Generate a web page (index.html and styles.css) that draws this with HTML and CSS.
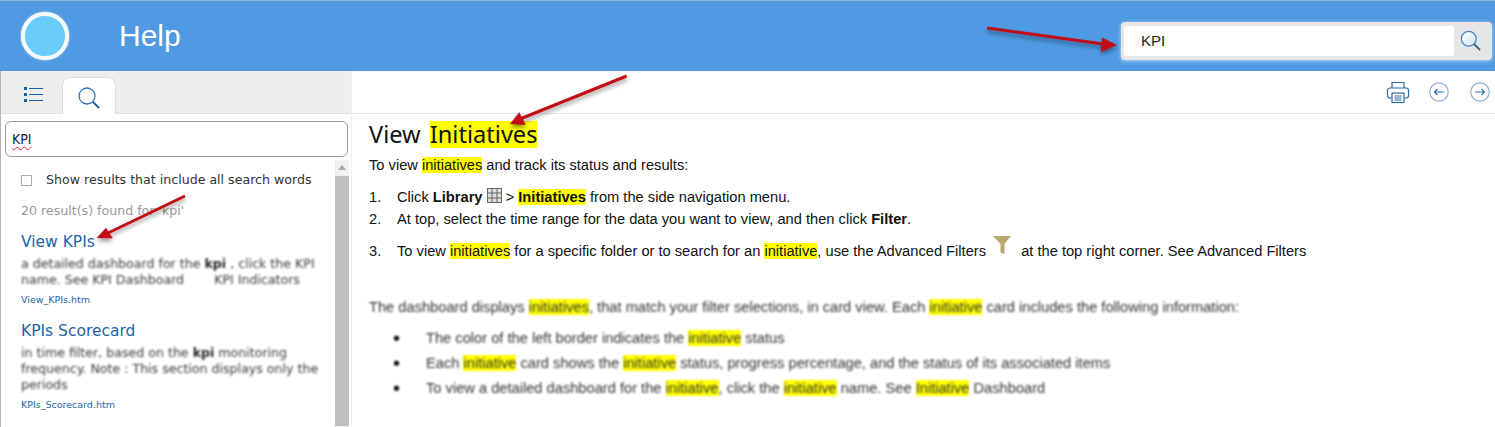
FILE: index.html
```html
<!DOCTYPE html>
<html lang="en">
<head>
<meta charset="utf-8">
<title>Help</title>
<link rel="stylesheet" href="styles.css">
</head>
<body>
<header class="topbar">
  <div class="logo"></div>
  <div class="title">Help</div>
  <div class="top-search">
    <div class="top-input">KPI</div>
    <svg class="top-glass" width="21" height="21" viewBox="0 0 24 24"><defs><linearGradient id="g" x1="0" y1="0" x2="1" y2="1"><stop offset="0" stop-color="#fff"/><stop offset="1" stop-color="#cfe3f5"/></linearGradient></defs><circle cx="10" cy="10" r="8.500" fill="url(#g)" stroke="#4a86bd" stroke-width="1.4"/><path d="M16 16 23 23" stroke="#2b679f" stroke-width="2.200"/></svg>
  </div>
</header>
<div class="main">
  <aside class="side">
    <div class="tabs">
      <div class="tab-list">
        <svg width="19" height="15" viewBox="0 0 19 15"><g fill="#1d5fa0"><rect x="0" y="0" width="3" height="3"/><rect x="0" y="6" width="3" height="3"/><rect x="0" y="12" width="3" height="3"/><rect x="5" y="1" width="14" height="1"/><rect x="5" y="7" width="14" height="1"/><rect x="5" y="13" width="14" height="1"/></g></svg>
      </div>
      <div class="tab-search">
        <svg width="22" height="22" viewBox="0 0 22 22" fill="none"><circle cx="9" cy="9" r="8" stroke="#2a73b8" stroke-width="1.300"/><path d="M15 15 21 21" stroke="#1d5fa0" stroke-width="2"/></svg>
      </div>
    </div>
    <div class="side-input"><span class="squiggle">KPI</span></div>
    <div class="results">
      <div class="results-body">
        <label class="check"><span class="box"></span>Show results that include all search words</label>
        <p class="count">20 result(s) found for 'kpi'</p>
        <div class="result">
          <a class="r-title">View KPIs</a>
          <p class="r-text">a detailed dashboard for the <b>kpi</b> , click the KPI name. See KPI Dashboard <span class="wide">KPI Indicators</span></p>
          <a class="r-file">View_KPIs.htm</a>
        </div>
        <div class="result">
          <a class="r-title">KPIs Scorecard</a>
          <p class="r-text">in time filter, based on the <b>kpi</b> monitoring frequency. Note : This section displays only the periods</p>
          <a class="r-file">KPIs_Scorecard.htm</a>
        </div>
        <div class="result">
          <a class="r-title">KPI Dashboard</a>
        </div>
      </div>
      <div class="scroll"><div class="scroll-up"></div><div class="scroll-thumb"></div></div>
    </div>
  </aside>
  <main class="content">
    <div class="toolbar">
      <svg class="print" width="24" height="24" viewBox="0 0 24 24" fill="none" stroke="#2c6ca6" stroke-width="1.200"><path d="M6 8V2.500h12V8"/><rect x="1.500" y="8" width="21" height="10" rx="2.500"/><rect x="6" y="13" width="12" height="9.500" fill="#fff"/><path d="M8.500 16h7M8.500 18h7M8.500 20h7"/></svg>
      <svg width="20" height="20" viewBox="0 0 20 20" fill="none"><circle cx="10" cy="10" r="9.200" stroke="#8fb0cf" stroke-width="1.200"/><path d="M15 10H5.500M8.500 7 5.500 10l3 3" stroke="#2c6ca6" stroke-width="1.100"/></svg>
      <svg width="20" height="20" viewBox="0 0 20 20" fill="none"><circle cx="10" cy="10" r="9.200" stroke="#8fb0cf" stroke-width="1.200"/><path d="M5 10h9.500M11.500 7l3 3-3 3" stroke="#2c6ca6" stroke-width="1.100"/></svg>
    </div>
    <article class="doc">
      <h1>View <mark>Initiatives</mark></h1>
      <p class="intro">To view <mark>initiatives</mark> and track its status and results:</p>
      <ol class="steps">
        <li><span class="n">1.</span><span>Click <b>Library</b> <svg class="grid" width="15" height="15" viewBox="0 0 15 15"><rect width="15" height="15" fill="#666"/><g fill="#ddd"><rect x="1" y="1" width="3.500" height="3.500"/><rect x="5.500" y="1" width="4" height="3.500"/><rect x="10.500" y="1" width="3.500" height="3.500"/><rect x="1" y="5.500" width="3.500" height="4"/><rect x="5.500" y="5.500" width="4" height="4"/><rect x="10.500" y="5.500" width="3.500" height="4"/><rect x="1" y="10.500" width="3.500" height="3.500"/><rect x="5.500" y="10.500" width="4" height="3.500"/><rect x="10.500" y="10.500" width="3.500" height="3.500"/></g></svg> &gt; <mark><b>Initiatives</b></mark> from the side navigation menu.</span></li>
        <li><span class="n">2.</span><span>At top, select the time range for the data you want to view, and then click <b>Filter</b>.</span></li>
        <li class="third"><span class="n">3.</span><span>To view <mark>initiatives</mark> for a specific folder or to search for an <mark>initiative</mark>, use the Advanced Filters <svg class="funnel" width="18" height="18" viewBox="0 0 18 18"><path d="M0 0h18L11.500 8v10l-4-1.500V8Z" fill="#b9a971"/></svg> at the top right corner. See Advanced Filters</span></li>
      </ol>
      <div class="blurred">
        <p class="lead">The dashboard displays <mark>initiatives</mark>, that match your filter selections, in card view. Each <mark>initiative</mark> card includes the following information:</p>
        <ul class="bullets">
          <li>The color of the left border indicates the <mark>initiative</mark> status</li>
          <li>Each <mark>initiative</mark> card shows the <mark>initiative</mark> status, progress percentage, and the status of its associated items</li>
          <li>To view a detailed dashboard for the <mark>initiative</mark>, click the <mark>initiative</mark> name. See <mark>Initiative</mark> Dashboard</li>
        </ul>
      </div>
    </article>
  </main>
</div>
<svg class="arrows" width="1495" height="427" viewBox="0 0 1495 427">
  <defs><filter id="s" x="-20%" y="-40%" width="140%" height="180%"><feDropShadow dx="0" dy="3" stdDeviation="2" flood-color="#000" flood-opacity=".4"/></filter></defs>
  <g filter="url(#s)">
    <g stroke="#c00a12" stroke-width="3" fill="none">
      <path d="M987 28 1103 44"/>
      <path d="M626.700 76 520 119"/>
      <path d="M185 196 108 233"/>
    </g>
    <g fill="#c00a12">
      <path d="M1117 45 1102 37.500 1101 52Z"/>
      <path d="M510 124 519.300 112.300 525.700 125Z"/>
      <path d="M96.700 238 106 227.700 112.700 238.300Z"/>
    </g>
  </g>
</svg>
</body>
</html>
```
FILE: styles.css
```css
* { box-sizing: border-box; }
html, body { margin: 0; height: 427px; overflow: hidden; background: #fff; }
body { font-family: "Liberation Sans", Arial, sans-serif; color: #111; }

.topbar {
  height: 71px;
  background: #4f9ae3;
  border-top: 1px solid #8db5dc;
  display: flex;
  align-items: center;
  padding: 0 3px 0 21px;
}
.logo {
  width: 48px; height: 48px;
  border-radius: 50%;
  background: #6accfa;
  border: 4px solid #f4fafd;
  box-shadow: 0 0 2px #fff;
}
.title { margin-left: 50px; color: #fff; font-size: 30px; margin-top: -1px; }
.top-search {
  margin-left: auto;
  width: 371px; height: 38px;
  margin-top: 9px;
  background: #e6e6e6;
  border-radius: 4px;
  box-shadow: 0 1px 4px rgba(255,255,255,.6);
  padding: 4px 0 4px 3px;
  display: flex;
  align-items: center;
}
.top-input {
  width: 330px; height: 30px;
  background: #fff;
  border-radius: 3px;
  padding-left: 17px;
  font-size: 15px;
  line-height: 30px;
  color: #222;
}
.top-glass { margin-left: 6px; }

.main { display: flex; height: 356px; }
.side { width: 351px; flex: none; display: flex; flex-direction: column; border-left: 1px solid #b5b5b5; }
.tabs {
  height: 43px;
  background: #eee;
  border-bottom: 1px solid #e2e2e2;
  display: flex;
  align-items: flex-end;
  padding-left: 23px;
}
.tab-list { width: 38px; height: 37px; padding-top: 11px; }
.tab-list svg { display: block; }
.tab-search {
  width: 54px; height: 37px;
  margin-bottom: -1px;
  background: #fff;
  border: 1px solid #ddd;
  border-bottom: 0;
  border-radius: 8px 8px 0 0;
  padding: 9px 0 0 15px;
}
.side-input {
  margin: 7px 3px 0 4px;
  height: 36px;
  border: 1px solid #9a9a9a;
  border-radius: 6px;
  padding-left: 6px;
  font: 14px/34px Tahoma, "DejaVu Sans Condensed", "Open Sans", sans-serif;
  color: #222;
}
.squiggle { text-decoration: underline wavy #d33; text-decoration-thickness: 1px; text-underline-offset: 2px; }
.results { display: flex; flex: 1; min-height: 0; margin-top: 3px; }
.results-body { width: 333px; padding: 11px 0 0 20px; overflow: hidden; font-family: "DejaVu Sans", Tahoma, sans-serif; }
.check { display: flex; align-items: center; font-size: 12.600px; color: #333; line-height: 18px; white-space: nowrap; }
.box { width: 11px; height: 11px; border: 1px solid #aaa; margin-right: 14px; flex: none; }
.count { margin: 13px 0 0; font-size: 12.600px; line-height: 18px; color: #999; white-space: nowrap; }
.result { margin-top: 13px; }
.count + .result { margin-top: 11px; }
.r-title { display: block; color: #1a65a8; font-size: 15.500px; line-height: 22px; }
.r-text { margin: 3px 0 5px; font-size: 12.600px; line-height: 16px; color: #3a3a3a; width: 312px; filter: blur(.8px); }
.r-text b { color: #222; }
.wide { margin-left: 26px; }
.r-file { display: block; color: #1a65a8; font-size: 9.500px; line-height: 14px; }
.scroll { width: 14px; margin-left: 1px; background: #f1f1f1; flex: none; }
.scroll-up { height: 16px; position: relative; }
.scroll-up::before {
  content: ""; position: absolute; left: 3px; top: 5px;
  border: 4px solid transparent; border-top: 0; border-bottom: 5px solid #aaa;
}
.scroll-thumb { height: 250px; background: #c0c0c0; }

.content { flex: 1; min-width: 0; border-left: 1px solid #f0f0f0; }
.toolbar {
  height: 43px;
  border-bottom: 1px solid #e6e6e6;
  display: flex;
  justify-content: flex-end;
  align-items: center;
  padding: 0 5px 0 0;
  gap: 21px;
}
.print { margin-right: -2px; }
.doc { padding: 7px 0 0 17px; }
mark { background: #ff0; color: inherit; }
h1 { margin: 0; font: 400 23.600px/27px "Noto Sans", "Open Sans", sans-serif; word-spacing: 3px; color: #111; }
h1 mark { display: inline-block; line-height: 27px; }
.intro { margin: 9px 0 0; font-size: 14.670px; line-height: 17px; }
.steps { list-style: none; margin: 12px 0 0; padding: 0; font-size: 14.670px; }
.steps li { display: flex; align-items: baseline; line-height: 22px; white-space: nowrap; }
.steps .third { margin-top: 6px; }
.n { width: 28px; flex: none; }
.grid { vertical-align: -1px; }
.funnel { vertical-align: 2px; margin: 0 6px 0 3px; }
.blurred { filter: blur(.9px); color: #333; margin-top: 37px; font-size: 14.670px; }
.lead { margin: 0; line-height: 17px; white-space: nowrap; }
.bullets { list-style: none; margin: 10px 0 0; padding: 0 0 0 57px; }
.bullets li { line-height: 25px; white-space: nowrap; }
.bullets li::before { content: "\2022"; display: inline-block; width: 33px; margin-left: -33px; font-size: 20px; line-height: 1; vertical-align: -2px; color: #111; }
.arrows { position: absolute; left: 0; top: 0; pointer-events: none; }
```
